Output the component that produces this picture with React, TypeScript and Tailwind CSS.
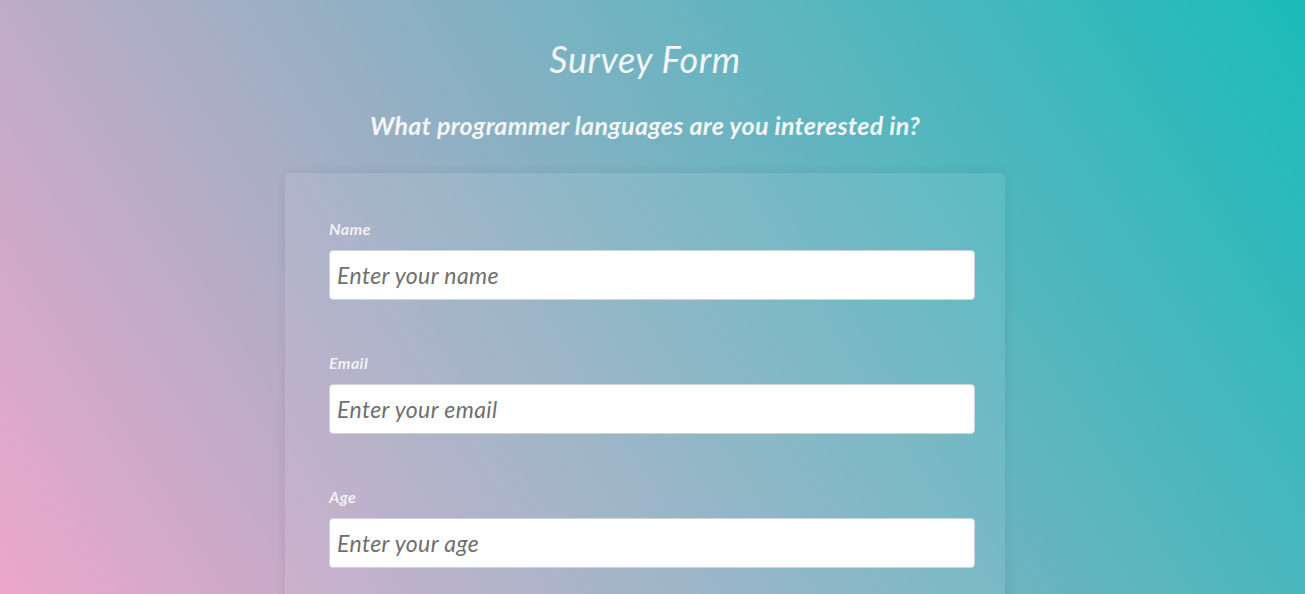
import React from "react";

const font = { fontFamily: "Lato, 'Noto Sans', sans-serif" };

function Field({ label, placeholder, type = "text" }: { label: string; placeholder: string; type?: string }) {
  return (
    <div className="flex flex-col">
      <label className="text-[16px] font-bold italic leading-[18px] tracking-[0.4px] text-[#f1f1f1]">{label}</label>
      <input
        type={type}
        placeholder={placeholder}
        className="mt-[12px] h-[50px] w-[646px] rounded-[4px] border border-[#cfd4da] bg-white px-[7px] text-[23px] italic tracking-[0.4px] text-[#555] placeholder:text-[#6f6f6f] outline-none"
        style={font}
      />
    </div>
  );
}

export default function App() {
  return (
    <div
      className="min-h-screen w-full bg-fixed bg-[linear-gradient(58deg,#eca7cb_0%,#1abcb9_100%)]"
      style={font}
    >
      <div className="flex flex-col items-center pr-[15px]">
        <h1 className="mt-[35px] text-[36px] font-normal italic leading-[48px] tracking-[0.6px] text-[#f3f5f7]">Survey Form</h1>
        <p className="mt-[26px] text-[25px] font-bold italic leading-[32px] tracking-[0.3px] text-[#f3f5f7]">
          What programmer languages are you interested in?
        </p>
        <div className="mt-[32px] mb-[40px] flex w-[720px] flex-col gap-[54px] rounded-[5px] bg-white/[0.08] pb-[40px] pl-[44px] pr-[30px] pt-[47px] shadow-[0_0_12px_rgba(0,0,0,0.08)]">
          <Field label="Name" placeholder="Enter your name" />
          <Field label="Email" placeholder="Enter your email" type="email" />
          <Field label="Age" placeholder="Enter your age" type="number" />
          <Field label="Favorite language" placeholder="Enter your favorite language" />
        </div>
      </div>
    </div>
  );
}
